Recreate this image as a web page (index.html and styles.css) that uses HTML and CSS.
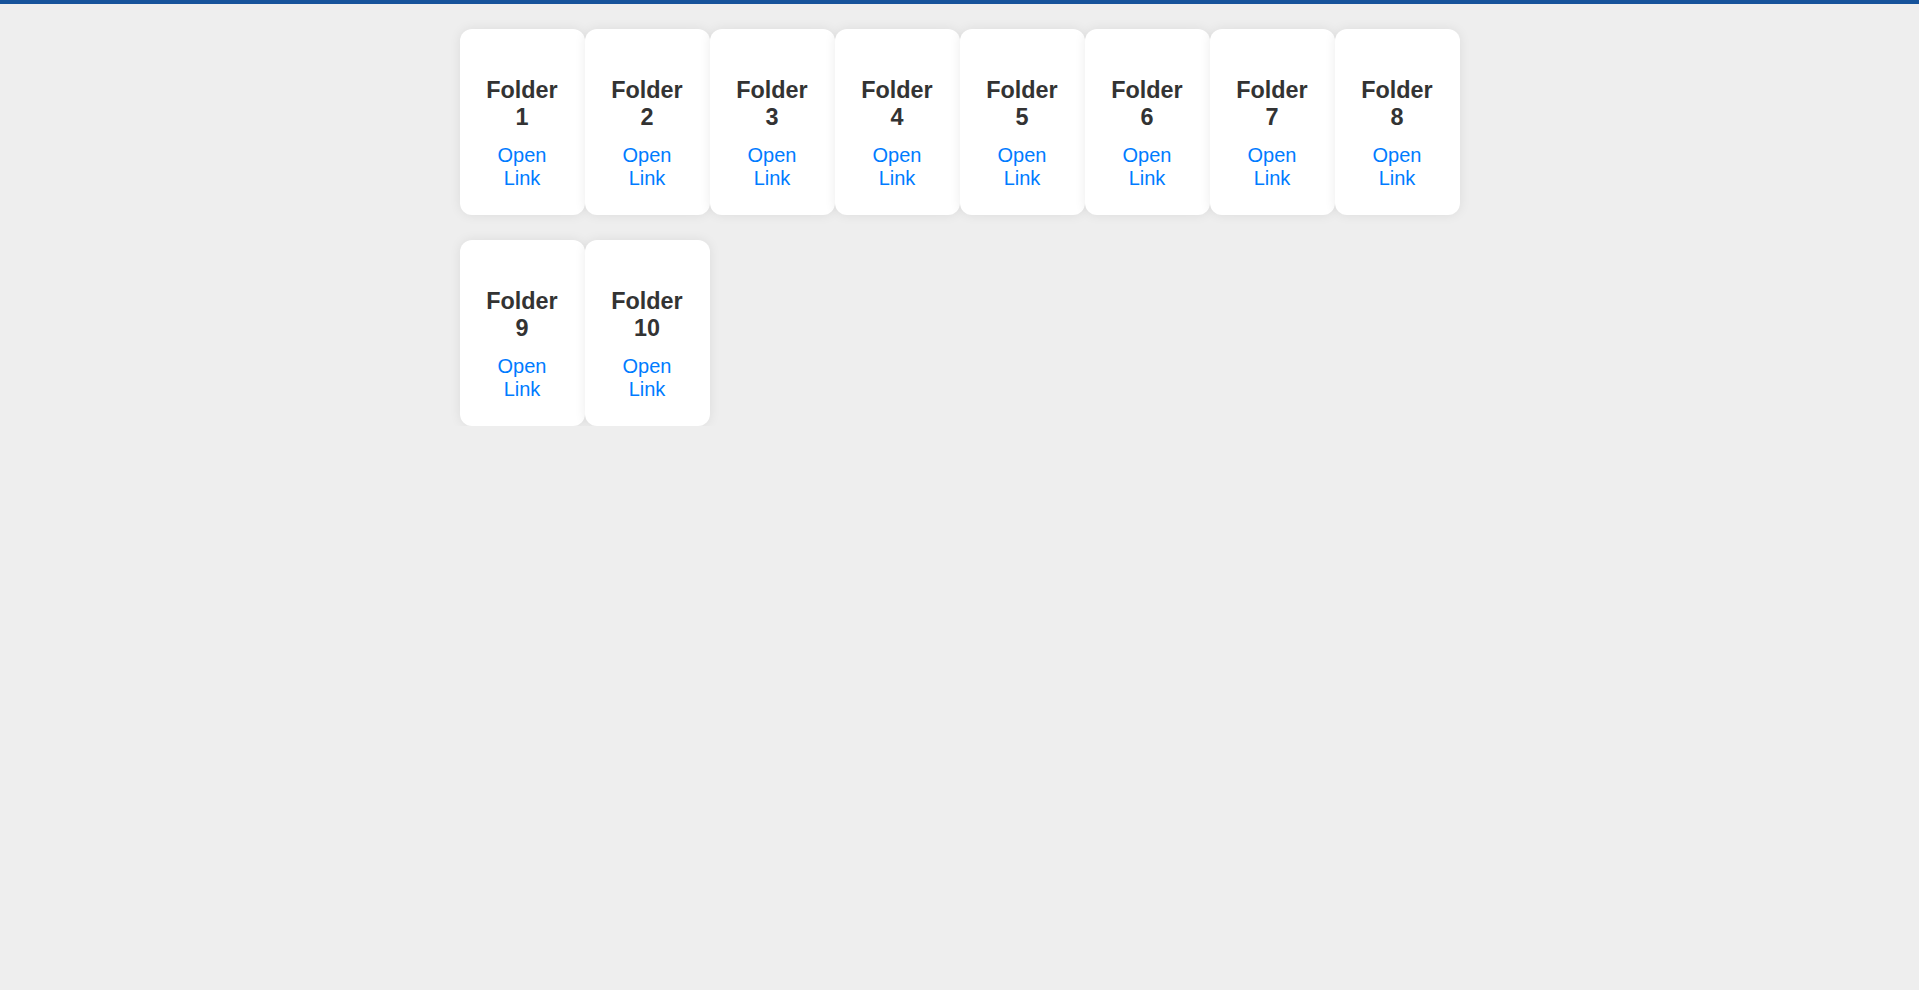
FILE: index.html
```html
<!DOCTYPE html>
<html lang="en">
<head>
    <meta charset="UTF-8">
    <meta name="viewport" content="width=device-width, initial-scale=1.0">
    <title>Folders</title>
    <link rel="stylesheet" href="styles.css">
</head>
<body>

<div class="top-bar"></div>

<!-- Folder grid -->
<div class="folder-grid">
    <div class="folder-card">
        <h3>Folder 1</h3>
        <a href="#">Open Link</a>
    </div>
    <div class="folder-card">
        <h3>Folder 2</h3>
        <a href="#">Open Link</a>
    </div>
    <div class="folder-card">
        <h3>Folder 3</h3>
        <a href="#">Open Link</a>
    </div>
    <div class="folder-card">
        <h3>Folder 4</h3>
        <a href="#">Open Link</a>
    </div>
    <div class="folder-card">
        <h3>Folder 5</h3>
        <a href="#">Open Link</a>
    </div>
    <div class="folder-card">
        <h3>Folder 6</h3>
        <a href="#">Open Link</a>
    </div>
    <div class="folder-card">
        <h3>Folder 7</h3>
        <a href="#">Open Link</a>
    </div>
    <div class="folder-card">
        <h3>Folder 8</h3>
        <a href="#">Open Link</a>
    </div>
    <div class="folder-card">
        <h3>Folder 9</h3>
        <a href="#">Open Link</a>
    </div>
    <div class="folder-card">
        <h3>Folder 10</h3>
        <a href="#">Open Link</a>
    </div>
</div>

</body>
</html>
```

FILE: styles.css
```css
body {
    font-family: "Liberation Sans", Arial, sans-serif;
    margin: 0;
    padding: 0;
    background-color: #eeeeee;
    text-align: center;
}

.top-bar {
    height: 4px;
    background-color: #16539b; /* Dark blue strip */
}

.folder-grid {
    display: grid;
    grid-template-columns: repeat(8, 125px);
    row-gap: 25px;
    width: 1000px;
    margin: 25px auto 0;
}

.folder-card {
    background: white;
    border-radius: 12px;
    box-shadow: 0 0 12px rgba(0, 0, 0, 0.08);
    padding: 25px;
}

.folder-card h3 {
    font-size: 23.4px;
    color: #333;
    margin: 23px 0 13px;
}

.folder-card a {
    display: block;
    font-size: 20px;
    color: #007bff;
    text-decoration: none;
}
```
